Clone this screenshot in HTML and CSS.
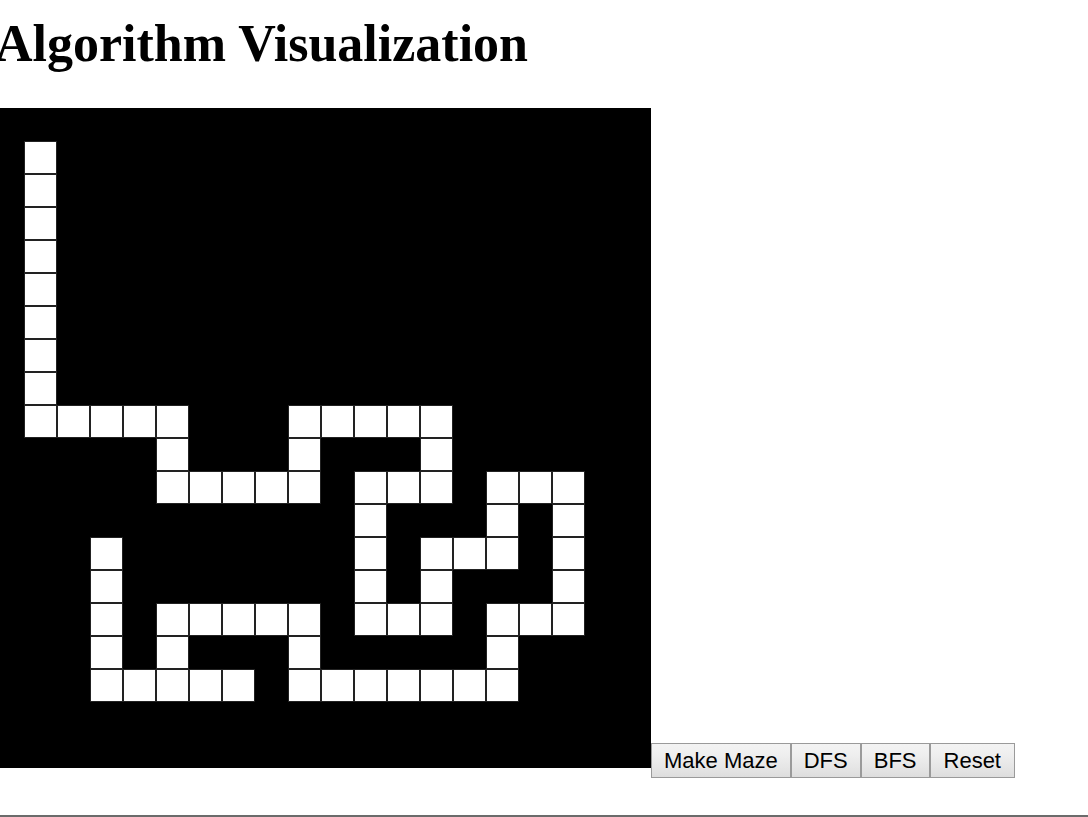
FILE: index.html
```html
<!DOCTYPE html>
<html lang="en">
<head>
<meta charset="utf-8">
<title>Algorithm Visualization</title>
<link rel="stylesheet" href="styles.css">
</head>
<body>
<div class="page">
  <h1 class="title">Algorithm Visualization</h1>
  <div class="stage"><div class="maze">
    <div class="row"><i></i><i></i><i></i><i></i><i></i><i></i><i></i><i></i><i></i><i></i><i></i><i></i><i></i><i></i><i></i><i></i><i></i><i></i><i></i><i></i></div>
    <div class="row"><i></i><i class="w"></i><i></i><i></i><i></i><i></i><i></i><i></i><i></i><i></i><i></i><i></i><i></i><i></i><i></i><i></i><i></i><i></i><i></i><i></i></div>
    <div class="row"><i></i><i class="w"></i><i></i><i></i><i></i><i></i><i></i><i></i><i></i><i></i><i></i><i></i><i></i><i></i><i></i><i></i><i></i><i></i><i></i><i></i></div>
    <div class="row"><i></i><i class="w"></i><i></i><i></i><i></i><i></i><i></i><i></i><i></i><i></i><i></i><i></i><i></i><i></i><i></i><i></i><i></i><i></i><i></i><i></i></div>
    <div class="row"><i></i><i class="w"></i><i></i><i></i><i></i><i></i><i></i><i></i><i></i><i></i><i></i><i></i><i></i><i></i><i></i><i></i><i></i><i></i><i></i><i></i></div>
    <div class="row"><i></i><i class="w"></i><i></i><i></i><i></i><i></i><i></i><i></i><i></i><i></i><i></i><i></i><i></i><i></i><i></i><i></i><i></i><i></i><i></i><i></i></div>
    <div class="row"><i></i><i class="w"></i><i></i><i></i><i></i><i></i><i></i><i></i><i></i><i></i><i></i><i></i><i></i><i></i><i></i><i></i><i></i><i></i><i></i><i></i></div>
    <div class="row"><i></i><i class="w"></i><i></i><i></i><i></i><i></i><i></i><i></i><i></i><i></i><i></i><i></i><i></i><i></i><i></i><i></i><i></i><i></i><i></i><i></i></div>
    <div class="row"><i></i><i class="w"></i><i></i><i></i><i></i><i></i><i></i><i></i><i></i><i></i><i></i><i></i><i></i><i></i><i></i><i></i><i></i><i></i><i></i><i></i></div>
    <div class="row"><i></i><i class="w"></i><i class="w"></i><i class="w"></i><i class="w"></i><i class="w"></i><i></i><i></i><i></i><i class="w"></i><i class="w"></i><i class="w"></i><i class="w"></i><i class="w"></i><i></i><i></i><i></i><i></i><i></i><i></i></div>
    <div class="row"><i></i><i></i><i></i><i></i><i></i><i class="w"></i><i></i><i></i><i></i><i class="w"></i><i></i><i></i><i></i><i class="w"></i><i></i><i></i><i></i><i></i><i></i><i></i></div>
    <div class="row"><i></i><i></i><i></i><i></i><i></i><i class="w"></i><i class="w"></i><i class="w"></i><i class="w"></i><i class="w"></i><i></i><i class="w"></i><i class="w"></i><i class="w"></i><i></i><i class="w"></i><i class="w"></i><i class="w"></i><i></i><i></i></div>
    <div class="row"><i></i><i></i><i></i><i></i><i></i><i></i><i></i><i></i><i></i><i></i><i></i><i class="w"></i><i></i><i></i><i></i><i class="w"></i><i></i><i class="w"></i><i></i><i></i></div>
    <div class="row"><i></i><i></i><i></i><i class="w"></i><i></i><i></i><i></i><i></i><i></i><i></i><i></i><i class="w"></i><i></i><i class="w"></i><i class="w"></i><i class="w"></i><i></i><i class="w"></i><i></i><i></i></div>
    <div class="row"><i></i><i></i><i></i><i class="w"></i><i></i><i></i><i></i><i></i><i></i><i></i><i></i><i class="w"></i><i></i><i class="w"></i><i></i><i></i><i></i><i class="w"></i><i></i><i></i></div>
    <div class="row"><i></i><i></i><i></i><i class="w"></i><i></i><i class="w"></i><i class="w"></i><i class="w"></i><i class="w"></i><i class="w"></i><i></i><i class="w"></i><i class="w"></i><i class="w"></i><i></i><i class="w"></i><i class="w"></i><i class="w"></i><i></i><i></i></div>
    <div class="row"><i></i><i></i><i></i><i class="w"></i><i></i><i class="w"></i><i></i><i></i><i></i><i class="w"></i><i></i><i></i><i></i><i></i><i></i><i class="w"></i><i></i><i></i><i></i><i></i></div>
    <div class="row"><i></i><i></i><i></i><i class="w"></i><i class="w"></i><i class="w"></i><i class="w"></i><i class="w"></i><i></i><i class="w"></i><i class="w"></i><i class="w"></i><i class="w"></i><i class="w"></i><i class="w"></i><i class="w"></i><i></i><i></i><i></i><i></i></div>
    <div class="row"><i></i><i></i><i></i><i></i><i></i><i></i><i></i><i></i><i></i><i></i><i></i><i></i><i></i><i></i><i></i><i></i><i></i><i></i><i></i><i></i></div>
    <div class="row"><i></i><i></i><i></i><i></i><i></i><i></i><i></i><i></i><i></i><i></i><i></i><i></i><i></i><i></i><i></i><i></i><i></i><i></i><i></i><i></i></div>
  </div><button class="btn">Make Maze</button><button class="btn">DFS</button><button class="btn">BFS</button><button class="btn">Reset</button></div>
</div>
<div class="rule"></div>
</body>
</html>
```
FILE: styles.css
```css
html, body {
  margin: 0;
  padding: 0;
  background: #ffffff;
  overflow: hidden;
}

body {
  font-family: "Liberation Serif", "Times New Roman", serif;
  font-size: 16px;
  color: #000;
}

.page {
  margin-left: -9px;
}

.title {
  font-family: "Liberation Serif", "Times New Roman", serif;
  font-weight: bold;
  font-size: 52px;
  line-height: 60px;
  margin: 14px 0 34px 4px;
}

.stage {
  white-space: nowrap;
}

.maze {
  display: inline-block;
  overflow: hidden;
  width: 660px;
  height: 660px;
  background: #000;
  vertical-align: baseline;
}

.row {
  display: flex;
}

.row i {
  display: block;
  width: 33px;
  height: 33px;
  box-sizing: border-box;
}

.row i.w {
  background: #ffffff;
  border: 1px solid #222222;
}

.btn {
  font-family: "Liberation Sans", Arial, sans-serif;
  font-size: 22px;
  line-height: 25px;
  color: #000;
  margin: 0;
  padding: 4px 12px;
  border: 1px solid #9a9a9a;
  border-radius: 0;
  background: linear-gradient(to bottom, #f3f3f3 0%, #efefef 30%, #e6e6e6 70%, #dddddd 100%);
  vertical-align: baseline;
}

.btn:last-child {
  padding-right: 13px;
  padding-left: 13px;
}

.rule {
  margin-top: 37px;
  height: 0;
  border-top: 2px solid #6b6b6b;
}
```
